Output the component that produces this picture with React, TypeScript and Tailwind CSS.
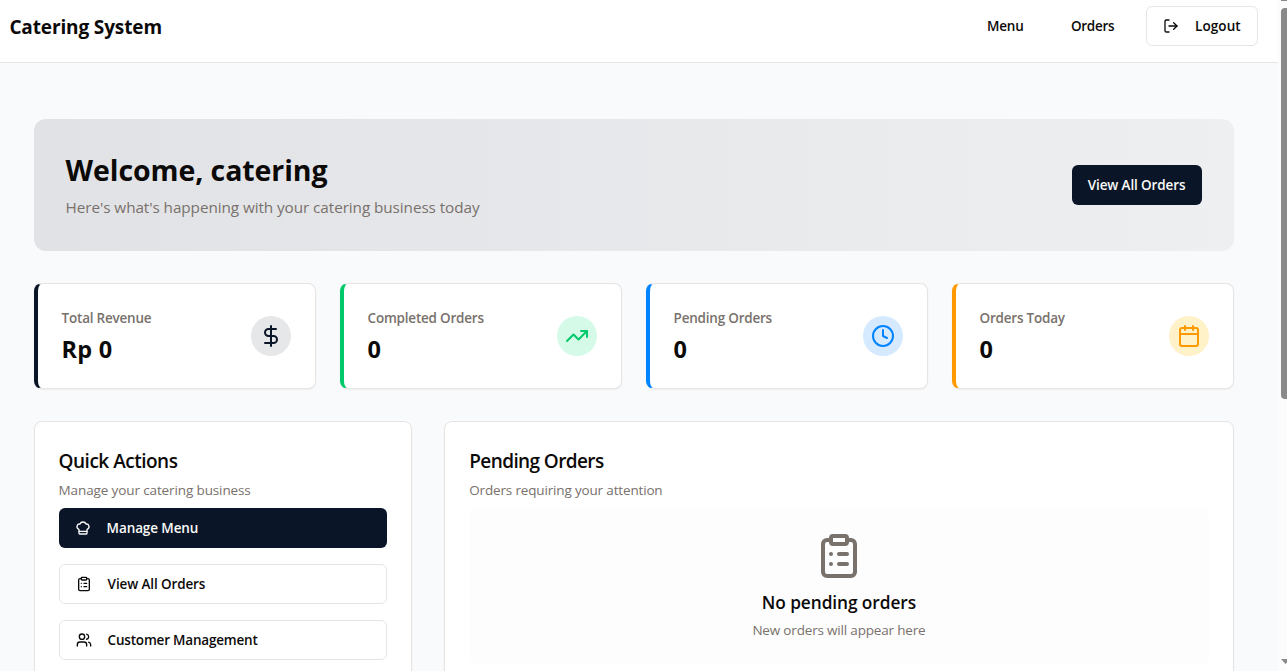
import type { ReactNode } from "react";
import { Calendar, ChefHat, ClipboardList, Clock, DollarSign, LogOut, TrendingUp, Users } from "lucide-react";

type StatProps = { label: string; value: string; accent: string; badge: string; icon: ReactNode };

function StatCard({ label, value, accent, badge, icon }: StatProps) {
  return (
    <div className={`flex h-[106px] items-center justify-between rounded-lg border border-l-4 border-y-[#e7e5e4] border-r-[#e7e5e4] bg-white px-6 shadow-xs ${accent}`}>
      <div>
        <p className="text-[13.5px] leading-5 font-semibold tracking-[-0.22px] whitespace-nowrap text-[#78716c]">{label}</p>
        <p className="pt-1.5 text-[23.5px] leading-[30px] font-bold tracking-[0.2px]">{value}</p>
      </div>
      <div className={`flex size-10 items-center justify-center rounded-full ${badge}`}>{icon}</div>
    </div>
  );
}

function ActionButton({ label, icon, primary, labelClass }: { label: string; icon: ReactNode; primary?: boolean; labelClass: string }) {
  return (
    <button
      className={`flex h-10 w-full items-center gap-4 rounded-md px-4 text-[13.5px] leading-5 font-semibold ${
        primary ? "bg-[#0a1628] text-[#fafaf9]" : "border border-[#e7e5e4] bg-white"
      }`}
    >
      {icon}
      <span className={labelClass}>{label}</span>
    </button>
  );
}

export default function App() {
  return (
    <div className="flex h-[671px] w-full overflow-hidden bg-[#f9fafc] font-['Open_Sans',sans-serif] text-[#0c0a09]">
      <div className="flex min-w-0 flex-1 flex-col overflow-hidden">
        <header className="flex h-[63px] shrink-0 items-start justify-between border-b border-[#e5e5e5] bg-white pt-1.5 pr-5 pl-[9.4px]">
          <h1 className="pt-[7px] text-[19px] leading-7 font-bold tracking-[-0.13px]">Catering System</h1>
          <nav className="flex h-10 items-center text-[13.5px] leading-5 font-semibold">
            <a className="w-[84px] tracking-[-0.2px]">Menu</a>
            <a className="w-[75px] tracking-[-0.3px]">Orders</a>
            <button className="flex h-10 w-28 items-center gap-4 rounded-md border border-[#e7e5e4] px-4">
              <LogOut className="size-4 shrink-0" />
              <span className="tracking-[0.1px]">Logout</span>
            </button>
          </nav>
        </header>

        <main className="ml-[33.6px] flex w-[1200px] flex-col gap-8 pt-14">
          <section className="flex h-[132px] shrink-0 items-center justify-between rounded-xl bg-linear-to-r from-[#e1e2e5] to-[#eeeff1] px-8">
            <div>
              <h2 className="pt-px text-[28.5px] leading-9 font-bold tracking-[-0.08px]">Welcome, catering</h2>
              <p className="mt-[7px] text-[15.3px] leading-6 tracking-[-0.08px] text-[#78716c]">
                Here's what's happening with your catering business today
              </p>
            </div>
            <button className="h-10 w-[130px] rounded-md bg-[#0a1628] text-[13.5px] leading-5 font-semibold tracking-[-0.12px] whitespace-nowrap text-[#fafaf9]">
              View All Orders
            </button>
          </section>

          <section className="grid grid-cols-4 gap-6">
            <StatCard label="Total Revenue" value="Rp 0" accent="border-l-[#0a1628]" badge="bg-[#e6e7e9]" icon={<DollarSign className="size-6 text-[#0a1628]" />} />
            <StatCard label="Completed Orders" value="0" accent="border-l-[#00c96b]" badge="bg-[#d5fbe8]" icon={<TrendingUp className="size-6 text-[#00c96b]" />} />
            <StatCard label="Pending Orders" value="0" accent="border-l-[#0084ff]" badge="bg-[#d6eaff]" icon={<Clock className="size-6 text-[#0084ff]" />} />
            <StatCard label="Orders Today" value="0" accent="border-l-[#ff9900]" badge="bg-[#fff1c8]" icon={<Calendar className="size-6 text-[#ff9900]" />} />
          </section>

          <section className="grid grid-cols-3 gap-8">
            <div className="h-[320px] rounded-lg border border-[#e7e5e4] bg-white p-6 shadow-xs">
              <h3 className="pt-px text-[19px] leading-7 font-semibold tracking-[-0.5px]">Quick Actions</h3>
              <p className="mt-[5px] text-[13.5px] leading-5 tracking-[-0.12px] text-[#78716c]">Manage your catering business</p>
              <div className="mt-2 flex flex-col gap-4">
                <ActionButton primary label="Manage Menu" labelClass="tracking-[-0.1px]" icon={<ChefHat className="size-4" />} />
                <ActionButton label="View All Orders" labelClass="tracking-[-0.12px]" icon={<ClipboardList className="size-4" />} />
                <ActionButton label="Customer Management" labelClass="tracking-[-0.2px]" icon={<Users className="size-4" />} />
              </div>
            </div>

            <div className="col-span-2 h-[320px] rounded-lg border border-[#e7e5e4] bg-white p-6 shadow-xs">
              <h3 className="pt-px text-[19px] leading-7 font-semibold tracking-[-0.6px]">Pending Orders</h3>
              <p className="mt-[5px] text-[13.5px] leading-5 tracking-[-0.16px] text-[#78716c]">Orders requiring your attention</p>
              <div className="mt-2 flex h-[156px] flex-col items-center rounded-lg bg-[#fdfdfd] pt-6">
                <ClipboardList className="size-12 text-[#78716c]" />
                <h4 className="mt-[9px] text-[17.3px] leading-7 font-semibold tracking-[-0.08px]">No pending orders</h4>
                <p className="mt-[3px] text-[13.5px] leading-5 tracking-[-0.18px] text-[#78716c]">New orders will appear here</p>
              </div>
            </div>
          </section>
        </main>
      </div>

      <div className="flex w-[9px] shrink-0 flex-col items-end justify-between bg-[#fcfcfc]">
        <div className="flex w-full flex-col items-end gap-[7px]">
          <div className="h-px w-1.5 bg-[#8a8a8a]" />
          <div className="h-[391px] w-1.5 rounded-l-[4px] bg-[#8a8a8a]" />
        </div>
        <svg className="mb-[7px] h-[5px] w-1.5" viewBox="0 0 6 5">
          <path d="M0 0h6v3.5l-1.500 1.500z" fill="#8a8a8a" />
        </svg>
      </div>
    </div>
  );
}
